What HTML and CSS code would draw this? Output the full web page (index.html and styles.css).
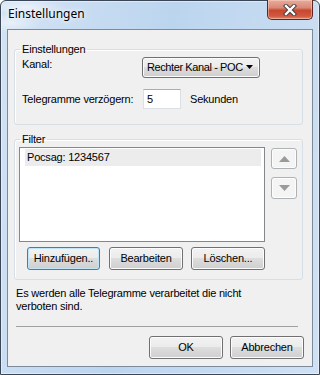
FILE: index.html
```html
<!doctype html>
<html lang="de">
<head>
  <meta charset="UTF-8">
  <meta name="viewport" content="width=device-width, initial-scale=1.0">
  <title>Einstellungen</title>
  <link rel="stylesheet" href="styles.css">
</head>
<body>
  <div class="window">
    <div class="titlebar">
      <span class="title">Einstellungen</span>
      <div class="close">
        <svg width="14" height="12" viewBox="0 0 14 12">
          <path d="M3 2 L11 10 M11 2 L3 10" stroke="#3b3b3b" stroke-width="4.2" stroke-linecap="square"/>
          <path d="M3 2 L11 10 M11 2 L3 10" stroke="#fff" stroke-width="2.4" stroke-linecap="square"/>
        </svg>
      </div>
    </div>
    <div class="client">
      <fieldset class="group group-settings">
        <legend>Einstellungen</legend>
        <div class="row row-kanal">
          <span class="label">Kanal:</span>
          <div class="combo">
            <span class="combo-text">Rechter Kanal - POC</span>
            <svg class="combo-arrow" width="7" height="4" viewBox="0 0 7 4"><polygon points="0,0 7,0 3.5,4" fill="#000"/></svg>
          </div>
        </div>
        <div class="row row-delay">
          <span class="label label-wide">Telegramme verzögern:</span>
          <div class="textbox">5</div>
          <span class="unit">Sekunden</span>
        </div>
      </fieldset>
      <fieldset class="group group-filter">
        <legend>Filter</legend>
        <div class="filter-body">
          <div class="listbox">
            <div class="item selected">Pocsag: 1234567</div>
          </div>
          <div class="movers">
            <button class="btn mover mover-up">
              <svg width="11" height="6" viewBox="0 0 11 6"><polygon points="5.5,0 11,6 0,6" fill="#9a9a9a"/></svg>
            </button>
            <button class="btn mover mover-down">
              <svg width="11" height="6" viewBox="0 0 11 6"><polygon points="0,0 11,0 5.5,6" fill="#9a9a9a"/></svg>
            </button>
          </div>
        </div>
        <div class="filter-actions">
          <button class="btn btn-default">Hinzufügen..</button>
          <button class="btn">Bearbeiten</button>
          <button class="btn">Löschen...</button>
        </div>
      </fieldset>
      <p class="note">Es werden alle Telegramme verarbeitet die nicht<br>verboten sind.</p>
      <div class="sep"></div>
      <div class="dialog-actions">
        <button class="btn">OK</button>
        <button class="btn">Abbrechen</button>
      </div>
    </div>
  </div>
</body>
</html>
```

FILE: styles.css
```css
body {
  margin: 0;
  background: #fff;
  font-family: "Liberation Sans", Arial, sans-serif;
  font-size: 11px;
  line-height: 13px;
  letter-spacing: -0.2px;
  color: #000;
}
.window {
  box-sizing: border-box;
  display: flex;
  flex-direction: column;
  width: 320px;
  height: 375px;
  padding: 0 6px 7px 6px;
  border: 1px solid #3a4656;
  border-radius: 6px 6px 0 0;
  background:
    radial-gradient(ellipse 40px 8px at 25px 6px, rgba(255,255,255,.55), rgba(255,255,255,0)),
    radial-gradient(ellipse 30px 10px at 10px 22px, rgba(255,255,255,.5), rgba(255,255,255,0)),
    linear-gradient(100deg, #d3e3f4 0%, #bcd5ef 45%, #c4daf1 70%, #cfe1f4 100%);
  box-shadow: inset 0 0 0 1px rgba(255,255,255,.45);
}
.titlebar {
  display: flex;
  justify-content: space-between;
  align-items: flex-start;
  height: 28px;
  flex: none;
}
.title {
  padding: 5px 0 0 1px;
  font-family: "Noto Sans", "Open Sans", sans-serif;
  font-size: 12px;
  line-height: 16px;
  letter-spacing: 0;
  color: #000;
  text-shadow: 0 0 6px rgba(255,255,255,.95), 0 0 3px rgba(255,255,255,.9);
}
.close {
  display: flex;
  align-items: center;
  justify-content: center;
  box-sizing: border-box;
  width: 46px;
  height: 20px;
  margin-top: -1px;
  border: 1px solid #5d2620;
  border-top: 0;
  border-radius: 0 0 5px 5px;
  background: linear-gradient(#e9ab9c 0%, #d98a77 40%, #c8472f 55%, #cf5a3f 85%, #e08a6c 100%);
  box-shadow: inset 0 0 0 1px rgba(255,220,210,.45);
}
.client {
  flex: 1;
  display: flex;
  flex-direction: column;
  border: 1px solid #7d8a99;
  background: #f0f0f0;
}
.group {
  margin: 0 9px 0 6px;
  border: 1px solid #d5dfe5;
  border-radius: 3px;
  min-width: 0;
  box-shadow: inset 1px 1px 0 #fff;
}
.group legend {
  padding: 0 2px;
  margin-left: -2px;
  line-height: 13px;
}
.group-settings {
  margin-top: 13px;
  padding: 1px 7px 15px 7px;
}
.row {
  display: flex;
}
.row-kanal {
  align-items: flex-start;
}
.label {
  width: 120px;
  flex: none;
  padding-top: 1px;
}
.label-wide {
  width: 121px;
  padding-top: 0;
}
.combo {
  box-sizing: border-box;
  display: flex;
  align-items: center;
  width: 118px;
  height: 21px;
  padding: 0 1px 1px 4px;
  border: 1px solid #707070;
  border-radius: 3px;
  background: linear-gradient(#f2f2f2 0%, #ebebeb 50%, #dddddd 50%, #cfcfcf 100%);
  box-shadow: inset 0 0 0 1px #fbfbfb;
  white-space: nowrap;
}
.combo-text {
  flex: 1;
  min-width: 0;
  letter-spacing: -0.4px;
}
.combo-arrow {
  flex: none;
  margin: 0 5px 0 2px;
}
.row-delay {
  align-items: center;
  margin-top: 11px;
}
.textbox {
  box-sizing: border-box;
  width: 38px;
  height: 20px;
  padding: 3px 0 0 3px;
  border: 1px solid #dbdfe6;
  border-top-color: #abadb3;
  background: #fff;
}
.unit {
  margin-left: 9px;
}
.group-filter {
  margin-top: 8px;
  padding: 1px 4px 9px 4px;
}
.group-filter legend {
  margin-left: 1px;
}
.filter-body {
  display: flex;
  align-items: flex-start;
}
.listbox {
  box-sizing: border-box;
  width: 246px;
  height: 95px;
  padding: 1px 3px 0 5px;
  border: 1px solid #828790;
  background: #fff;
}
.item {
  height: 17px;
  padding: 2px 0 0 2px;
  box-sizing: border-box;
  line-height: 13px;
}
.item.selected {
  background: #ececec;
}
.movers {
  display: flex;
  flex-direction: column;
  margin-left: 6px;
}
.btn {
  box-sizing: border-box;
  height: 23px;
  padding: 0;
  border: 1px solid #707070;
  border-radius: 3px;
  background: linear-gradient(#f2f2f2 0%, #ebebeb 50%, #dddddd 50%, #cfcfcf 100%);
  box-shadow: inset 0 0 0 1px #fcfcfc;
  font-family: "Liberation Sans", Arial, sans-serif;
  font-size: 11px;
  line-height: 13px;
  letter-spacing: -0.2px;
  color: #000;
}
.mover {
  display: flex;
  align-items: center;
  justify-content: center;
  width: 26px;
  height: 21px;
  border-color: #adb2b5;
  background: #f4f4f4;
  box-shadow: inset 0 0 0 1px #fdfdfd;
}
.mover-up {
  margin-top: 1px;
}
.mover-down {
  margin-top: 8px;
  height: 22px;
}
.filter-actions {
  display: flex;
  margin-top: 5px;
  padding-left: 8px;
}
.filter-actions .btn {
  width: 74px;
}
.filter-actions .btn + .btn {
  margin-left: 8px;
}
.filter-actions .btn-default {
  width: 73px;
  margin-right: 1px;
}
.btn-default {
  border-color: #3c7fb1;
  box-shadow: inset 0 0 0 1px #c0e4f8;
}
.note {
  margin: 7px 0 0 8px;
}
.sep {
  width: 282px;
  height: 1px;
  margin: 13px 0 0 8px;
  background: #a0a0a0;
}
.dialog-actions {
  display: flex;
  justify-content: flex-end;
  margin-top: 9px;
  padding-right: 8px;
}
.dialog-actions .btn {
  width: 74px;
}
.dialog-actions .btn + .btn {
  margin-left: 7px;
}
```
